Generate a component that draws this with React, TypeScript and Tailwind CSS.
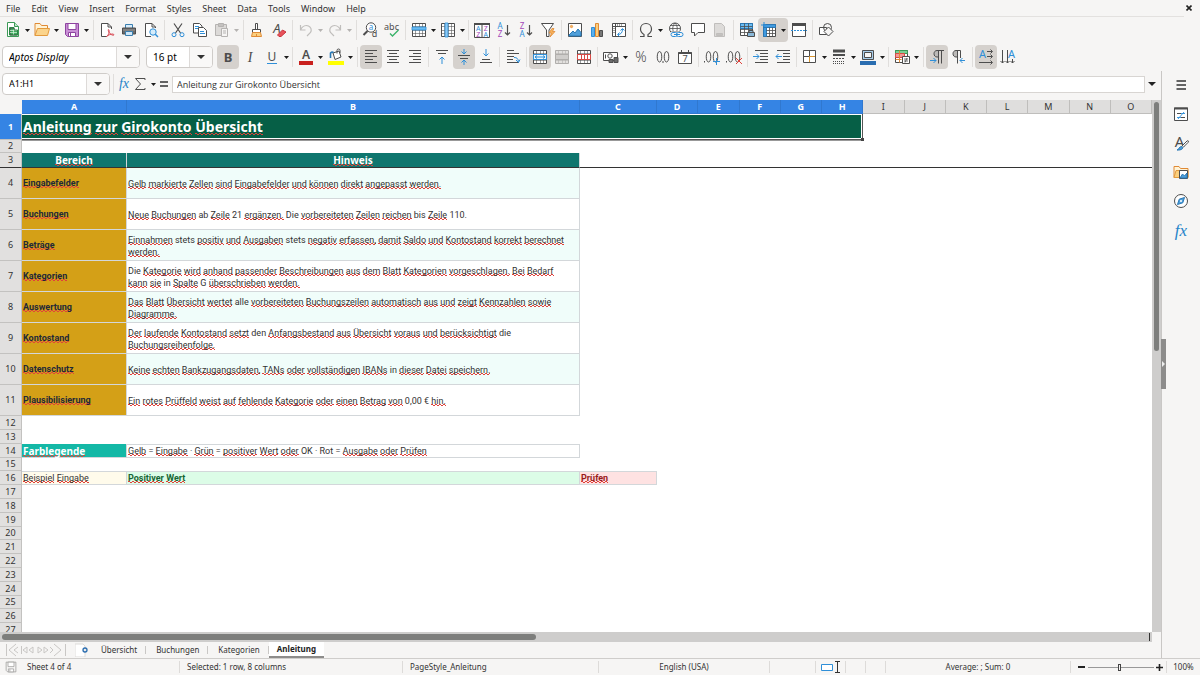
import React from 'react';
import clsx from 'clsx';

const MENUS = ['File', 'Edit', 'View', 'Insert', 'Format', 'Styles', 'Sheet', 'Data', 'Tools', 'Window', 'Help'];
const COLUMNS = ['A', 'B', 'C', 'D', 'E', 'F', 'G', 'H', 'I', 'J', 'K', 'L', 'M', 'N', 'O'];

const HINTS = [
  ['Eingabefelder', 'Gelb markierte Zellen sind Eingabefelder und können direkt angepasst werden.'],
  ['Buchungen', 'Neue Buchungen ab Zeile 21 ergänzen. Die vorbereiteten Zeilen reichen bis Zeile 110.'],
  ['Beträge', 'Einnahmen stets positiv und Ausgaben stets negativ erfassen, damit Saldo und Kontostand korrekt berechnet\nwerden.'],
  ['Kategorien', 'Die Kategorie wird anhand passender Beschreibungen aus dem Blatt Kategorien vorgeschlagen. Bei Bedarf\nkann sie in Spalte G überschrieben werden.'],
  ['Auswertung', 'Das Blatt Übersicht wertet alle vorbereiteten Buchungszeilen automatisch aus und zeigt Kennzahlen sowie\nDiagramme.'],
  ['Kontostand', 'Der laufende Kontostand setzt den Anfangsbestand aus Übersicht voraus und berücksichtigt die\nBuchungsreihenfolge.'],
  ['Datenschutz', 'Keine echten Bankzugangsdaten, TANs oder vollständigen IBANs in dieser Datei speichern.'],
  ['Plausibilisierung', 'Ein rotes Prüffeld weist auf fehlende Kategorie oder einen Betrag von 0,00 € hin.'],
];

// words the English dictionary accepts
const KNOWN = new Set(['stets', 'ab', 'Die', '21', 'bis', '110.', 'in', 'G', 'alle', 'den', 'die', '0,00', '€', '=', '·', 'OK', 'Rot']);

const Spell = ({ children }: { children: string }) => (
  <>
    {children.split(/(\s)/).map((word, i) =>
      KNOWN.has(word) || !word.trim() ? (
        word
      ) : (
        <span key={i} className="bg-[linear-gradient(90deg,#e0413a_50%,transparent_50%),linear-gradient(90deg,transparent_50%,#e0413a_50%)] bg-[length:4px_1px] bg-[position:0_calc(100%_-_2px),0_calc(100%_-_1px)] bg-repeat-x">
          {word}
        </span>
      ),
    )}
  </>
);

/* ---------- icons ---------- */

type IconProps = { children: React.ReactNode; size?: string };

const Icon = ({ children, size = 'size-4' }: IconProps) => (
  <svg viewBox="0 0 16 16" fill="none" stroke="#4d4d4d" className={clsx(size, 'shrink-0 overflow-visible')} aria-hidden="true">
    {children}
  </svg>
);

type GlyphProps = { x: number; y: number; s: number; fill?: string; weight?: number; italic?: boolean; serif?: boolean; children: string };

const Glyph = ({ x, y, s, fill = '#4d4d4d', weight = 400, italic, serif, children }: GlyphProps) => (
  <text x={x} y={y} fontSize={s} fill={fill} stroke="none" fontWeight={weight} fontStyle={italic ? 'italic' : 'normal'} fontFamily={serif ? '"Liberation Serif", serif' : '"Noto Sans", sans-serif'} textAnchor="middle">
    {children}
  </text>
);

const Caret = ({ dim }: { dim?: boolean }) => (
  <svg viewBox="0 0 5 3" className="w-[5px] h-[3px] shrink-0" aria-hidden="true">
    <path d="M0 0h5L2.5 3z" fill={dim ? '#b5b3b1' : '#1c1c1c'} />
  </svg>
);

const BLUE = '#2f8fd8';

const NewDoc = () => (
  <Icon>
    <path d="M2.500.5h7l4 4v10h-11z" fill="#fff" stroke="#3c9a57" />
    <path d="M9.500.5v4h4" fill="#bfe6c9" stroke="#3c9a57" />
    <path d="M5 6h4v2.500h3.500v4.500H5z" fill="#3fae5f" />
    <path d="M5 8.500h7M5 10.500h7M8.500 7v6" stroke="#d9f3df" strokeWidth=".7" />
    <path d="M4.500 5.500h4.500v2.500h3.500v5h-8z" stroke="#2c8546" />
  </Icon>
);
const Open = () => (
  <Icon>
    <path d="M1 13.500V1.500h5l1.500 2H13.500v3" fill="#fff3d6" stroke="#e08a35" />
    <path d="M3.500 6.500h12l-2 7H1z" fill="#fbd48c" stroke="#e39a3d" />
  </Icon>
);
const Save = ({ grey }: { grey?: boolean }) => (
  <Icon>
    <path d="M1.500 1.500h13v13h-11l-2-2z" fill={grey ? '#f6f5f4' : '#c98fd6'} stroke={grey ? '#9b9a98' : '#8e44a0'} />
    <path d="M4 1.500h8v6H4z" fill="#fff" stroke={grey ? '#9b9a98' : '#8e44a0'} />
    <path d="M4.500 10.500h7v4h-7z" fill="#fff" stroke={grey ? '#9b9a98' : '#8e44a0'} />
    <path d="M6.500 11v3" stroke={grey ? '#9b9a98' : '#8e44a0'} />
  </Icon>
);
const Pdf = () => (
  <Icon>
    <path d="M12.500 7V5L9 1.500H2.500v13H8" fill="#fff" />
    <path d="M9 1.500V5h3.500" />
    <path d="M7.500 14.500c2-1 3-4 2.500-6.500-.3-1-1-.5-.7.500.7 2.500 2.700 4.500 5 4.800 1 0 .8-1.200-.5-1.300-2 0-4.500 1-6.300 2.500z" stroke="#d94a55" />
  </Icon>
);
const Printer = () => (
  <Icon>
    <path d="M4.500 6V2.500h7V6" fill="#d7ecfb" stroke="#3a7fb0" />
    <path d="M1.500 6h13v6h-13z" fill="#6b6b6b" />
    <path d="M2 8h12" stroke="#9a9a9a" />
    <path d="M4.500 9.500h7v4h-7z" fill="#cfe6f6" stroke="#3a7fb0" />
  </Icon>
);
const Preview = () => (
  <Icon>
    <path d="M12.500 6V5L9 1.500H2.500v13H8" fill="#fff" />
    <path d="M9 1.500V5h3.500" />
    <circle cx="10" cy="10" r="3.200" fill="#d4ecfb" stroke={BLUE} />
    <path d="M12.300 12.300l2.700 2.700" stroke={BLUE} strokeWidth="1.500" />
  </Icon>
);
const Cut = () => (
  <Icon>
    <path d="M4 1.500l6.500 9.500M12 1.500L5.500 11" strokeWidth="1.200" />
    <circle cx="4" cy="12.700" r="2" stroke={BLUE} />
    <circle cx="12" cy="12.700" r="2" stroke={BLUE} />
  </Icon>
);
const Copy = () => (
  <Icon>
    <path d="M1.500 1.500h6l2.500 2.500v7H1.500z" fill="#fff" />
    <path d="M3 4.500h4M3 6.500h3" stroke={BLUE} />
    <path d="M6.500 5.500h5l3 3v6h-8z" fill="#fff" />
    <path d="M8 9.500h4M8 11.500h5" stroke={BLUE} />
  </Icon>
);
const Paste = () => (
  <Icon>
    <path d="M1.500 2.500h11v11h-11z" fill="#dcdad8" stroke="#b5b3b1" />
    <path d="M4.500 1.500h5v3h-5z" fill="#c4c2c0" stroke="#b5b3b1" />
    <path d="M7.500 6.500h6v8h-6z" fill="#f6f5f4" stroke="#b5b3b1" />
    <path d="M9 9h3M9 11h3" stroke="#b5b3b1" />
  </Icon>
);
const Brush = () => (
  <Icon>
    <path d="M6.500 1.500h2v6h-2zM3.500 7.500h8v3h-8z" fill="#fff" />
    <path d="M3.500 10.500h8l1 4h-10z" fill="#fbcf7e" stroke="#e08a35" />
    <path d="M7.500 12v2.500" stroke="#e08a35" />
  </Icon>
);
const ClearFormat = () => (
  <Icon>
    <Glyph x={6} y={11} s={13} italic>A</Glyph>
    <path d="M6.500 13l5-5 3.500 2-5 4.500H8z" fill="#e8525a" stroke="#c9353f" />
  </Icon>
);
const Undo = ({ redo }: { redo?: boolean }) => (
  <Icon>
    <g transform={redo ? 'matrix(-1 0 0 1 16 0)' : undefined}>
      <path d="M2.500 3v5h5M2.500 8C4.500 4 8 3 10.500 4s3.500 4 2 6.500L9 14" stroke="#c0bebc" strokeWidth="1.200" />
    </g>
  </Icon>
);
const Find = () => (
  <Icon>
    <circle cx="9" cy="5.500" r="4.700" fill="#fff" />
    <Glyph x={9} y={8} s={8} fill={BLUE}>a</Glyph>
    <path d="M5.500 9L1.500 13" strokeWidth="2" />
    <Glyph x={12.500} y={15} s={9}>d</Glyph>
  </Icon>
);
const SpellCheck = () => (
  <Icon>
    <Glyph x={7.500} y={8} s={9}>abc</Glyph>
    <path d="M6 11.500l2.500 2.500L14.500 8" stroke="#3cb36a" strokeWidth="1.400" />
  </Icon>
);
const Grid = ({ kind }: { kind: 'row' | 'col' | 'merge' | 'plain' | 'split' }) => {
  const line = kind === 'plain' ? '#b0aeac' : '#4d4d4d';
  return (
    <Icon>
      <path d="M1.500 1.500h13v13h-13z" fill={kind === 'plain' ? '#e2e0de' : '#fff'} stroke={line} />
      <path d="M2 4.500h12M2 8.500h12M2 11.500h12M4.500 2v12M8.500 2v12M11.500 2v12" stroke={line} strokeOpacity=".7" strokeWidth=".8" />
      {kind === 'row' && <path d="M1 5h14v3H1z" fill="#6bbcf2" stroke={BLUE} strokeWidth=".8" />}
      {kind === 'col' && <path d="M5 1h3v14H5z" fill="#8cc9f4" stroke={BLUE} strokeWidth=".8" />}
      {kind === 'merge' && (
        <>
          <path d="M1.500 5.500h13v5h-13z" fill="#eaf6fe" stroke={BLUE} />
          <path d="M3 8h10M5 6.500L3 8l2 1.500M11 6.500L13 8l-2 1.500" stroke={BLUE} />
        </>
      )}
      {kind === 'plain' && <path d="M1.500 5.500h13v5h-13z" fill="#cfcdcb" stroke={line} />}
      {kind === 'split' && <path d="M1.500 5.500h13v5h-13zM5.500 5.500v5M8.500 5.500v5M11.500 5.500v5" fill="#fff" stroke="#d94a45" />}
    </Icon>
  );
};
const Sort = () => (
  <Icon>
    <path d="M.5 1.500h15v14H.5zM8 3v12" fill="#fff" />
    <path d="M0 2h16" strokeWidth="2" />
    <Glyph x={4.200} y={8.500} s={7} fill={BLUE}>A</Glyph>
    <Glyph x={4.200} y={15} s={7} fill="#a347ba">Z</Glyph>
    <Glyph x={11.800} y={8.500} s={7} fill="#a347ba">Z</Glyph>
    <Glyph x={11.800} y={15} s={7} fill={BLUE}>A</Glyph>
  </Icon>
);
const SortDir = ({ desc }: { desc?: boolean }) => (
  <Icon>
    <Glyph x={4} y={7} s={8} fill={desc ? '#a347ba' : BLUE}>{desc ? 'Z' : 'A'}</Glyph>
    <Glyph x={4} y={15} s={8} fill={desc ? BLUE : '#a347ba'}>{desc ? 'A' : 'Z'}</Glyph>
    <path d="M11.500 3v10M9 10.500l2.500 2.500 2.500-2.500" strokeWidth="1.200" />
  </Icon>
);
const Filter = () => (
  <Icon>
    <path d="M1.500 1.500h12L9 8v6.500H6.500V8z" fill="#fff" />
    <path d="M12 6.500L9 11h2.500L10 15l5-5.500h-2.500l1.500-3z" fill="#f8b35c" stroke="#e08a35" strokeWidth=".8" />
  </Icon>
);
const Picture = () => (
  <Icon>
    <path d="M1.500 1.500h13v13h-13z" fill="#fff" />
    <path d="M2 13l4-4 2 2 3-4 3 3.500V14H2z" fill="#4f9fda" stroke="#2a78b5" />
    <circle cx="4.500" cy="4.500" r="1.200" fill="#f8b35c" stroke="#e08a35" strokeWidth=".6" />
  </Icon>
);
const Chart = () => (
  <Icon>
    <path d="M2.500 5.500h3v9h-3z" fill="#5bb0ee" stroke={BLUE} />
    <path d="M6.500 1.500h3v13h-3z" fill="#fbcf7e" stroke="#e08a35" />
    <path d="M10.500 8.500h3v6h-3z" fill="#777" />
  </Icon>
);
const Pivot = () => (
  <Icon>
    <path d="M1.500 1.500h13v13h-13zM1.500 4.500h13M4.500 1.500v13" fill="#fff" />
    <path d="M7 12.500c3 0 4.500-2 4.500-5.500M9.500 8.500l2-2 2 2M8.500 10.500l-2 2 2 2" stroke={BLUE} />
    <path d="M6 3h1m1 0h1m1 0h1M3 6v1m0 1v1m0 1v1" />
  </Icon>
);
const Omega = () => (
  <Icon>
    <path d="M2 14.500h4v-2C3.500 11 2.500 9 2.500 7c0-3.200 2.300-5.500 5.500-5.500s5.500 2.300 5.500 5.500c0 2-1 4-3.500 5.500v2h4" strokeWidth="1.200" />
  </Icon>
);
const Link = () => (
  <Icon>
    <circle cx="7" cy="6.500" r="5.500" fill="#fff" />
    <path d="M1.500 6.500h11M2.500 3.500h9M2.500 9.500h9M7 1C4 4 4 9 7 12M7 1c3 3 3 8 0 11" strokeWidth=".8" />
    <path d="M3 9.500h12v6H3z" fill="#f6f5f4" stroke="none" />
    <rect x="3" y="10.500" width="6.500" height="4" rx="2" fill="#f6f5f4" stroke={BLUE} />
    <rect x="8.500" y="10.500" width="6.500" height="4" rx="2" fill="#f6f5f4" stroke={BLUE} />
    <path d="M6 12.500h6" stroke={BLUE} />
  </Icon>
);
const Comment = () => (
  <Icon>
    <path d="M1.500 1.500h13v9H8L4.500 14v-3.500h-3z" fill="#fff" />
  </Icon>
);
const HeaderFooter = () => (
  <Icon>
    <path d="M2.500 1.500h7l3 3v10h-10z" fill="#dddbd9" stroke="#c0bebc" />
    <path d="M4.500 11.500h6v2h-6z" fill="#c4c2c0" stroke="#c0bebc" />
  </Icon>
);
const PrintArea = () => (
  <Icon>
    <path d="M1.500 1.500h12v12h-12z" fill="#fff" />
    <path d="M1.500 1.500h12v5h-12z" fill="#6bbcf2" stroke="#2a78b5" />
    <path d="M1.500 4.500h12M1.500 7.500h12M1.500 10.500h12M5.500 1.500v12M9.500 1.500v12" strokeWidth=".8" />
    <path d="M8.500 10.500h7v4h-7zM10 8.500h4v2h-4z" fill="#8ab8d8" />
  </Icon>
);
const Freeze = () => (
  <Icon>
    <path d="M2.500 2.500h12v12h-12z" fill="#fff" />
    <path d="M2.500 2.500h12v3h-12zM2.500 5.500h3v9h-3z" fill="#3f9ae0" stroke="#2a78b5" />
    <path d="M5.500 8.500h9M5.500 11.500h9M8.500 5.500v9M11.500 5.500v9" strokeWidth=".8" />
    <path d="M0 3h5M3 0v5" stroke={BLUE} />
  </Icon>
);
const SplitWindow = () => (
  <Icon>
    <path d="M1.500 1.500h13v13h-13z" fill="#fff" />
    <path d="M1 2.500h14" strokeWidth="3" />
    <path d="M0 8.500h16" stroke={BLUE} strokeDasharray="2 1" />
  </Icon>
);
const Shapes = () => (
  <Icon>
    <path d="M1.500 5.500h7v7h-7z" fill="#fff" />
    <circle cx="9.500" cy="5.500" r="4" />
    <path d="M10.500 5l4.500 4.500L10.500 14 6 9.500z" fill="#f6f5f4" />
  </Icon>
);

const Align = ({ kind }: { kind: 'left' | 'center' | 'right' }) => (
  <Icon>
    {kind === 'left' && <path d="M2 1.500h12M2 4.500h8M2 7.500h12M2 10.500h8M2 13.500h12" />}
    {kind === 'center' && <path d="M2 1.500h12M4 4.500h8M2 7.500h12M4 10.500h8M2 13.500h12" />}
    {kind === 'right' && <path d="M2 1.500h12M6 4.500h8M2 7.500h12M6 10.500h8M2 13.500h12" />}
  </Icon>
);
const VAlign = ({ kind }: { kind: 'top' | 'middle' | 'bottom' }) => (
  <Icon>
    {kind === 'top' && (
      <>
        <path d="M2 1.500h12M4 4.500h8" />
        <path d="M8 15V8M5.500 10.500L8 8l2.500 2.500" stroke={BLUE} />
      </>
    )}
    {kind === 'middle' && (
      <>
        <path d="M2 6.500h12M4 9.500h8" />
        <path d="M8 0v5M5.500 2.500L8 5l2.500-2.500M8 16v-5M5.500 13.500L8 11l2.500 2.500" stroke={BLUE} />
      </>
    )}
    {kind === 'bottom' && (
      <>
        <path d="M4 10.500h8M2 13.500h12" />
        <path d="M8 0v7M5.500 4.500L8 7l2.500-2.500" stroke={BLUE} />
      </>
    )}
  </Icon>
);
const Wrap = () => (
  <Icon>
    <path d="M2 1.500h7M2 4.500h12M2 7.500h7M2 10.500h6M2 13.500h12" />
    <path d="M9 8.500c3 0 4 1 4.500 4M11 11l2.500 2.500L15 10.500" stroke={BLUE} />
  </Icon>
);
const FontColor = () => (
  <Icon>
    <Glyph x={8} y={10} s={12} weight={600}>A</Glyph>
    <path d="M1 14h14" stroke="#c9211e" strokeWidth="4" />
  </Icon>
);
const FillColor = () => (
  <Icon>
    <path d="M5 4l6-2 2 6-6 2.500z" fill="#fff" />
    <path d="M9 4.500V1.500a1.500 1.500 0 0 1 3 0V4" />
    <path d="M2.500 9V4c1-1 2-1 3-.5" stroke="#2a78b5" strokeWidth="1.600" />
    <path d="M0 14h16" stroke="#ffff00" strokeWidth="4" />
  </Icon>
);
const Currency = () => (
  <Icon>
    <path d="M.5 3.500h14v8H.5z" fill="#fff" />
    <circle cx="7" cy="7" r="2.200" />
    <path d="M2.500 5.500v4" />
    <path d="M6 10.500h4v3H6zM11 8.500h4v5h-4z" fill="#6b6b6b" />
  </Icon>
);
const Calendar = () => (
  <Icon>
    <path d="M1.500 3.500h13v11h-13z" fill="#fff" />
    <path d="M1.500 4h13" strokeWidth="2" />
    <path d="M4.500 1v3M11.500 1v3" />
    <Glyph x={8} y={13} s={9}>7</Glyph>
  </Icon>
);
// two open zeros, shared by the number format icons
const ZEROS = 'M4.500 2.500c-3 0-3 10.500 0 10.500s3-10.500 0-10.500zM11.500 2.500c-3 0-3 10.500 0 10.500s3-10.500 0-10.500z';
const NumberFormat = () => (
  <Icon>
    <path d={ZEROS} />
    <path d="M8 12v2" />
  </Icon>
);
const Decimal = ({ remove }: { remove?: boolean }) => (
  <Icon>
    <path d={ZEROS} />
    <path d="M.5 12v1.500" />
    {remove ? <path d="M10 9l6 6M16 9l-6 6" stroke="#e0413a" /> : <path d="M12.500 9v7M9 12.500h7" stroke={BLUE} />}
  </Icon>
);
const Indent = ({ out }: { out?: boolean }) => (
  <Icon>
    <path d={out ? 'M2 1.500h13M8 4.500h7M8 7.500h7M8 10.500h7M2 13.500h13' : 'M2 1.500h13M7 4.500h8M7 7.500h8M7 10.500h8M2 13.500h13'} />
    <path d={out ? 'M7 7.500H1M3.500 5L1 7.500 3.500 10' : 'M0 7.500h6M3.500 5L6 7.500 3.500 10'} stroke={BLUE} />
  </Icon>
);
const Borders = () => (
  <Icon>
    <path d="M1.500 1.500h12v12h-12zM7.500 1.500v6M1.500 7.500h6" fill="#fff" />
    <path d="M7.500 7.500v5.500M7.500 7.500H13" stroke="#d9952f" />
  </Icon>
);
const BorderStyle = () => (
  <Icon>
    <path d="M2 2h12" strokeWidth="3" />
    <path d="M2 6h12" strokeWidth="2" />
    <path d="M2 9.500h12" strokeDasharray="2 1" />
    <path d="M2 12.500h12M2 14.500h12" strokeDasharray="1 1" />
  </Icon>
);
const BorderColor = () => (
  <Icon>
    <path d="M2.500 1.500h11v9h-11z" fill="#a8cdea" />
    <path d="M4.500 3.500h7v5h-7z" fill="#f6f5f4" />
    <path d="M0 14h16" stroke="#2a6db0" strokeWidth="4" />
  </Icon>
);
const Conditional = () => (
  <Icon>
    <path d="M1.500 1.500h12v12h-12z" fill="#fff" />
    <path d="M1.500 1.500h12v3h-12z" fill="#7ccf94" stroke="#3c9a57" />
    <path d="M1.500 4.500h9v4h-9z" fill="#f19a96" stroke="#d94a45" />
    <path d="M1.500 10.500h6M5.500 1.500v12" stroke="#e08a35" />
    <path d="M8.500 7.500h7v7h-7z" fill="#fff" />
    <path d="M10 10h4M10 12h4M13 9l-2 4.500" strokeWidth=".8" />
  </Icon>
);
const Pilcrow = ({ rtl }: { rtl?: boolean }) => (
  <Icon>
    <path d={rtl ? 'M6.500 8V1.500H5C1 1.500 1 8 5 8z' : 'M9.500 8V1.500H8C4 1.500 4 8 8 8z'} fill="#bcbab8" />
    <path d={rtl ? 'M6.500 8v6.500M9.500 9V1.500H6' : 'M9.500 8v6.500M12.500 14.500v-13M9 1.500h6'} />
    <path d={rtl ? 'M14 11.500H9M11.500 9L9 11.500l2.500 2.500' : 'M1 11.500h6M4.500 9L7 11.500 4.500 14'} stroke={BLUE} />
  </Icon>
);
const TextDir = ({ vertical }: { vertical?: boolean }) => (
  <Icon>
    {vertical ? (
      <>
        <Glyph x={11.500} y={9} s={11} fill={BLUE}>A</Glyph>
        <path d="M2.500 1v13M.5 12l2 2 2-2M7.500 1v13M5.500 12l2 2 2-2M12.500 10v4M10.500 12l2 2 2-2" />
      </>
    ) : (
      <>
        <Glyph x={4.500} y={9} s={11} fill={BLUE}>A</Glyph>
        <path d="M9 2.500h5M12.500.5l2 2-2 2M9 7.500h5M12.500 5.500l2 2-2 2M1 13.500h13M12.500 11.500l2 2-2 2" />
      </>
    )}
  </Icon>
);
const Fx = ({ s = 14 }: { s?: number }) => (
  <Icon>
    <Glyph x={8} y={12} s={s} fill="#2583c9" italic serif>fx</Glyph>
  </Icon>
);

/* ---------- toolbar parts ---------- */

type ToolProps = { label: string; active?: boolean; children: React.ReactNode };

const Tool = ({ label, active, children }: ToolProps) => (
  <button type="button" aria-label={label} className={clsx('w-[22px] h-6 shrink-0 rounded flex items-center justify-center', active && 'bg-[#d5d1cd]')}>
    {children}
  </button>
);

type DropToolProps = ToolProps & { tight?: boolean; dim?: boolean };

const DropTool = ({ label, active, tight, dim, children }: DropToolProps) => (
  <button type="button" aria-label={label} className={clsx('h-6 shrink-0 rounded flex items-center gap-1 pl-[3px]', tight ? 'w-[29px]' : 'w-[30px]', active && 'bg-[#d5d1cd]')}>
    {children}
    <Caret dim={dim} />
  </button>
);

const Sep = () => <span className="mx-[2px] w-px h-5 shrink-0 bg-[#e0dedc]" />;

type ComboProps = { label: string; value: string; className: string; italic?: boolean; wide?: boolean };

const Combo = ({ label, value, className, italic, wide }: ComboProps) => (
  <div className={clsx('flex h-[22px] shrink-0 rounded border border-[#cfccc9] bg-white overflow-hidden', className)}>
    <input aria-label={label} defaultValue={value} className={clsx('min-w-0 flex-1 pl-1.5 outline-none text-black', wide ? 'text-[10px]' : 'text-[9px]', italic && 'italic')} />
    <button type="button" aria-label={`${label} list`} className="w-[23px] border-l border-[#dddad8] bg-[#f9f8f7] flex items-center justify-center">
      <svg viewBox="0 0 8 4" className="w-2 h-1" aria-hidden="true"><path d="M0 0h8L4 4z" fill="#333" /></svg>
    </button>
  </div>
);

/* ---------- sheet ---------- */

const RowHead = ({ n, selected }: { n: number; selected?: boolean }) => (
  <th scope="row" className={clsx("border-r border-b border-[#c3c2c0] p-0 font-['Noto_Sans',sans-serif]", selected ? 'bg-[#3584e4] text-white font-bold' : 'bg-[#e1e0df] font-normal', n === 3 && 'border-b-[#333]')}>
    {n}
  </th>
);

const GRID = 'border-r border-b border-[#d3d7da] p-0 pl-px';
const NARROW = "font-['Roboto',sans-serif] [&_span]:pb-px";

const EmptyRow = ({ n }: { n: number }) => (
  <tr className={n % 5 === 0 ? 'h-[13px]' : 'h-[14px]'}>
    <RowHead n={n} />
    <td colSpan={15} className="p-0" />
  </tr>
);

const Sheet = () => (
  <table className="w-full table-fixed border-separate border-spacing-0 text-[9px] leading-3 text-[#333]">
    <colgroup>
      <col className="w-[22px]" />
      <col className="w-[105px]" />
      <col className="w-[453px]" />
      <col className="w-[77px]" />
      {COLUMNS.slice(3).map((c) => <col key={c} />)}
    </colgroup>
    <thead>
      <tr className="h-[14px]">
        <td className="bg-[#f6f5f4] p-0" />
        {COLUMNS.map((c, i) => (
          <th key={c} scope="col" className={clsx('p-0 border-r border-b', i < 8 ? 'bg-[#3584e4] border-[#3078cf] text-white font-bold' : 'bg-[#dfdedd] border-[#bfbebc] font-normal')}>
            {c}
          </th>
        ))}
      </tr>
    </thead>
    <tbody>
      <tr className="h-[26px]">
        <RowHead n={1} selected />
        <td colSpan={8} className="relative h-[26px] p-0 border-r border-b border-[#555]">
          <div className="h-[25px] border border-l-0 border-white bg-[#065f46] flex items-center pl-px text-[14px] font-bold text-white">
            <div><Spell>Anleitung zur Girokonto Übersicht</Spell></div>
          </div>
          <span className="absolute -right-[2px] -bottom-[2px] size-[3px] bg-[#444]" />
        </td>
        <td colSpan={7} className="p-0" />
      </tr>
      <tr className="h-[13px]">
        <RowHead n={2} />
        <td colSpan={8} className="border-t border-[#999] p-0" />
        <td colSpan={7} className="p-0" />
      </tr>
      <tr className="h-[15px]">
        <RowHead n={3} />
        <td className="p-0 border-r border-b border-r-[#d3d7da] border-b-[#333] bg-[#0f766e] text-[10px] font-bold text-white text-center"><Spell>Bereich</Spell></td>
        <td className="p-0 border-r border-b border-r-[#d3d7da] border-b-[#333] bg-[#0f766e] text-[10px] font-bold text-white text-center"><Spell>Hinweis</Spell></td>
        <td colSpan={13} className="p-0 border-b border-[#333]" />
      </tr>
      {HINTS.map(([area, hint], i) => (
        <tr key={area} className="h-[31px]">
          <RowHead n={i + 4} />
          <td className={clsx(GRID, NARROW, 'bg-[#d4a017] font-bold text-[#1f2937]')}><Spell>{area}</Spell></td>
          <td className={clsx(GRID, NARROW, 'pt-px whitespace-pre', i % 2 === 0 && 'bg-[#f0fdfa]')}><Spell>{hint}</Spell></td>
          <td colSpan={13} className="p-0" />
        </tr>
      ))}
      <EmptyRow n={12} />
      <EmptyRow n={13} />
      <tr className="h-[14px]">
        <RowHead n={14} />
        <td className={clsx(GRID, 'bg-[#14b8a6] text-[10px] font-bold text-white')}><Spell>Farblegende</Spell></td>
        <td className={clsx(GRID, NARROW, 'border-t')}><Spell>Gelb = Eingabe · Grün = positiver Wert oder OK · Rot = Ausgabe oder Prüfen</Spell></td>
        <td colSpan={13} className="p-0" />
      </tr>
      <EmptyRow n={15} />
      <tr className="h-[14px]">
        <RowHead n={16} />
        <td className={clsx(GRID, NARROW, 'border-t bg-[#fffbeb]')}><Spell>Beispiel Eingabe</Spell></td>
        <td className={clsx(GRID, NARROW, 'border-t bg-[#dcfce7] font-bold text-[#166534]')}><Spell>Positiver Wert</Spell></td>
        <td className={clsx(GRID, NARROW, 'border-t bg-[#fee2e2] font-bold text-[#991b1b]')}><Spell>Prüfen</Spell></td>
        <td colSpan={12} className="p-0" />
      </tr>
      {Array.from({ length: 11 }, (_, i) => <EmptyRow key={i} n={17 + i} />)}
    </tbody>
  </table>
);

/* ---------- side bar ---------- */

const SideBar = () => (
  <aside className="relative w-[39px] shrink-0 border-l border-[#c9c7c5] flex flex-col items-center gap-[13px] pt-[6px]">
    <button type="button" aria-label="Sidebar settings">
      <Icon><path d="M3.500 4h9.500M3.500 8h9.500M3.500 12h9.500" stroke="#333" strokeWidth="1.500" /></Icon>
    </button>
    <button type="button" aria-label="Properties">
      <Icon>
        <path d="M1.500 2h13v12.500h-13z" fill="#fff" />
        <path d="M1 2.500h14" strokeWidth="2" />
        <path d="M4 7.500h8M4 11.500h8M11 6L5 13" stroke={BLUE} strokeWidth=".9" />
        <path d="M4 7.500h4M8 11.500h4" />
      </Icon>
    </button>
    <button type="button" aria-label="Styles">
      <Icon>
        <Glyph x={6.500} y={12} s={15}>A</Glyph>
        <path d="M9 11l5-5c1.500-1 2 .5 1 1.500l-5 5" fill="#fff" />
        <path d="M4 15c2 0 2-4 5-3.500 2 1.500 0 4-5 3.500z" fill="#4f9fda" stroke="#2a78b5" />
      </Icon>
    </button>
    <button type="button" aria-label="Gallery">
      <Icon>
        <path d="M1 13.500v-11h5l1.500 2H15v9z" fill="#fff3d6" stroke="#e08a35" />
        <path d="M1 13.500l2-7h12v7z" fill="#fbcf7e" stroke="#e39a3d" />
        <path d="M6.500 6.500h8v8h-8z" fill="#fff" />
        <path d="M7 14l2.500-4 2 2 2.500-3v5z" fill="#4f9fda" stroke="#2a78b5" />
      </Icon>
    </button>
    <button type="button" aria-label="Navigator">
      <Icon>
        <circle cx="8" cy="8" r="6.500" fill="#fff" />
        <path d="M11.500 4.500L9.800 9.800 4.500 11.500 6.200 6.200z" fill="#4f9fda" stroke="#2a78b5" />
        <circle cx="8" cy="8" r="1" fill="#fff" stroke="none" />
      </Icon>
    </button>
    <button type="button" aria-label="Functions">
      <Icon><Glyph x={8} y={14} s={17} fill="#2583c9" italic serif>fx</Glyph></Icon>
    </button>
    <button type="button" aria-label="Hide sidebar" className="absolute -left-[1px] top-[268px] w-[5px] h-[50px] bg-[#8d8c8b] flex items-center justify-center">
      <svg viewBox="0 0 3 6" className="w-[3px] h-1.5" aria-hidden="true"><path d="M0 0l3 3-3 3z" fill="#eee" /></svg>
    </button>
  </aside>
);

const TabBar = () => (
  <div className="flex h-4 shrink-0 items-stretch text-[8px] text-[#333]">
    <div className="flex w-[75px] items-center pl-[5px]">
      <svg viewBox="0 0 62 14" className="w-[62px] h-3.5" fill="none" stroke="#c9c7c5" role="img" aria-label="Sheet navigation">
        <path d="M1.500 1v12M11 1L4 7l7 6M13 4L9 7l4 3M16.500 3v8M22 4l-4 3 4 3zM28 4l-4 3 4 3zM33 4l4 3-4 3zM39 4l4 3-4 3zM45 4l3 3-3 3M49 1l7 6-7 6M60.500 1v12" />
      </svg>
    </div>
    <button type="button" aria-label="Add sheet" className="flex w-[16px] items-center">
      <svg viewBox="0 0 14 14" className="size-3.5" fill="none" aria-hidden="true">
        <path d="M0 1h8l2 2v11H0z" fill="#fff" stroke="#dddbd9" />
        <circle cx="10" cy="7" r="2" stroke="#2a6db0" strokeWidth="1.300" />
      </svg>
    </button>
    {['Übersicht', 'Buchungen', 'Kategorien'].map((tab) => (
      <button type="button" key={tab} className="flex items-center pl-2.5 after:ml-2 after:h-2 after:w-px after:bg-[#c9c7c5]">
        {tab}
      </button>
    ))}
    <button type="button" className="border-b-2 border-[#8d8c8b] bg-white px-2 font-bold leading-3 text-[#222]">Anleitung</button>
  </div>
);

const STATUS_CELL = 'flex h-3 items-center border-r border-[#dddbd9] whitespace-nowrap';

const StatusBar = () => (
  <footer className="grid h-[17px] shrink-0 grid-cols-[22px_158fr_223fr_196fr_171fr_46px_30px_20px_20px_185fr_96px_33px] items-center border-t border-[#cfcdcb] text-[8px] text-[#333]">
    <div className="flex h-3 items-center justify-center">
      <span className="scale-75"><Save grey /></span>
    </div>
    <div className={clsx(STATUS_CELL, 'pl-[5px]')}>Sheet 4 of 4</div>
    <div className={clsx(STATUS_CELL, 'pl-[7px]')}>Selected: 1 row, 8 columns</div>
    <div className={clsx(STATUS_CELL, 'pl-[7px]')}>PageStyle_Anleitung</div>
    <div className={clsx(STATUS_CELL, 'justify-center')}>English (USA)</div>
    <div className={STATUS_CELL} />
    <div className={clsx(STATUS_CELL, 'justify-center')}>
      <svg viewBox="0 0 20 12" className="w-5 h-3" fill="none" aria-hidden="true">
        <path d="M.5 3.500h11v6H.5z" fill="#fff" stroke={BLUE} />
        <path d="M14 .5h5M14 11.500h5M16.500 1v10" stroke="#333" />
      </svg>
    </div>
    <div className={STATUS_CELL} />
    <div className={STATUS_CELL} />
    <div className={clsx(STATUS_CELL, 'justify-center')}>Average: ; Sum: 0</div>
    <div className={clsx(STATUS_CELL, 'justify-between pl-[7px] pr-[3px]')}>
      <button type="button" aria-label="Zoom out" className="h-[2px] w-[7px] bg-[#222]" />
      <input
        type="range"
        aria-label="Zoom"
        defaultValue={49}
        className="h-2 w-[66px] appearance-none bg-[linear-gradient(#999,#999)] bg-[length:100%_1px] bg-center bg-no-repeat [&::-webkit-slider-thumb]:appearance-none [&::-webkit-slider-thumb]:h-[7px] [&::-webkit-slider-thumb]:w-[3px] [&::-webkit-slider-thumb]:border [&::-webkit-slider-thumb]:border-[#444] [&::-webkit-slider-thumb]:bg-[#f6f5f4]"
      />
      <button type="button" aria-label="Zoom in" className="flex">
        <svg viewBox="0 0 7 7" className="size-[7px]" aria-hidden="true"><path d="M0 3.500h7M3.500 0v7" stroke="#222" strokeWidth="1.600" /></svg>
      </button>
    </div>
    <div className="flex items-center justify-center">100%</div>
  </footer>
);

export default function App() {
  return (
    <div className="flex h-screen w-full flex-col overflow-hidden bg-[#f6f5f4] font-['Noto_Sans',sans-serif]">
      <header className="shrink-0">
        <nav className="relative mr-4 flex h-[17px] items-center gap-[11px] border-b border-[#e3e1df] pl-[6px] pt-px text-[9px] text-[#333]">
          {MENUS.map((m) => <button type="button" key={m}>{m}</button>)}
          <button type="button" aria-label="Close document" className="absolute -right-[8px] top-[5px]">
            <svg viewBox="0 0 6 6" className="size-1.5" aria-hidden="true"><path d="M.5.5l5 5M5.500.5l-5 5" stroke="#222" strokeWidth="1.600" /></svg>
          </button>
        </nav>

        <div className="flex h-[26px] items-center pl-[2px]">
          <DropTool label="New" tight><NewDoc /></DropTool>
          <DropTool label="Open"><Open /></DropTool>
          <DropTool label="Save"><Save /></DropTool>
          <Sep />
          <Tool label="Export as PDF"><Pdf /></Tool>
          <Tool label="Print"><Printer /></Tool>
          <Tool label="Print preview"><Preview /></Tool>
          <Sep />
          <Tool label="Cut"><Cut /></Tool>
          <Tool label="Copy"><Copy /></Tool>
          <DropTool label="Paste" dim><Paste /></DropTool>
          <Sep />
          <Tool label="Clone formatting"><Brush /></Tool>
          <Tool label="Clear formatting"><ClearFormat /></Tool>
          <Sep />
          <DropTool label="Undo" tight dim><Undo /></DropTool>
          <DropTool label="Redo" dim><Undo redo /></DropTool>
          <Sep />
          <Tool label="Find and replace"><Find /></Tool>
          <Tool label="Spelling"><SpellCheck /></Tool>
          <Sep />
          <DropTool label="Row" tight><Grid kind="row" /></DropTool>
          <DropTool label="Column" tight><Grid kind="col" /></DropTool>
          <Sep />
          <Tool label="Sort"><Sort /></Tool>
          <Tool label="Sort ascending"><SortDir /></Tool>
          <Tool label="Sort descending"><SortDir desc /></Tool>
          <Tool label="AutoFilter"><Filter /></Tool>
          <Sep />
          <Tool label="Insert image"><Picture /></Tool>
          <Tool label="Insert chart"><Chart /></Tool>
          <Tool label="Insert pivot table"><Pivot /></Tool>
          <Sep />
          <DropTool label="Special character"><Omega /></DropTool>
          <Tool label="Insert hyperlink"><Link /></Tool>
          <Tool label="Insert comment"><Comment /></Tool>
          <Tool label="Headers and footers"><HeaderFooter /></Tool>
          <Sep />
          <Tool label="Print area"><PrintArea /></Tool>
          <DropTool label="Freeze rows and columns" active><Freeze /></DropTool>
          <Tool label="Split window"><SplitWindow /></Tool>
          <Sep />
          <Tool label="Draw functions"><Shapes /></Tool>
        </div>

        <div className="flex h-7 items-center pl-[2px]">
          <Combo label="Font name" value="Aptos Display" italic wide className="mr-1.5 w-[138px]" />
          <Combo label="Font size" value="16 pt" wide className="mr-1 w-[67px]" />
          <Tool label="Bold" active><Icon><Glyph x={8} y={12.500} s={13} weight={700}>B</Glyph></Icon></Tool>
          <Tool label="Italic"><Icon><Glyph x={8} y={12.500} s={14} italic serif>I</Glyph></Icon></Tool>
          <DropTool label="Underline" tight>
            <Icon>
              <Glyph x={8} y={12} s={12}>U</Glyph>
              <path d="M3 14.500h10" stroke={BLUE} />
            </Icon>
          </DropTool>
          <Sep />
          <DropTool label="Font color"><FontColor /></DropTool>
          <DropTool label="Background color"><FillColor /></DropTool>
          <Sep />
          <Tool label="Align left" active><Align kind="left" /></Tool>
          <Tool label="Align center"><Align kind="center" /></Tool>
          <Tool label="Align right"><Align kind="right" /></Tool>
          <Sep />
          <Tool label="Align top"><VAlign kind="top" /></Tool>
          <Tool label="Center vertically" active><VAlign kind="middle" /></Tool>
          <Tool label="Align bottom"><VAlign kind="bottom" /></Tool>
          <Sep />
          <Tool label="Wrap text"><Wrap /></Tool>
          <Sep />
          <Tool label="Merge and center" active><Grid kind="merge" /></Tool>
          <Tool label="Merge cells"><Grid kind="plain" /></Tool>
          <Tool label="Split cells"><Grid kind="split" /></Tool>
          <Sep />
          <DropTool label="Currency"><Currency /></DropTool>
          <Tool label="Percent"><Icon><Glyph x={8} y={13} s={14} weight={300}>%</Glyph></Icon></Tool>
          <Tool label="Number"><NumberFormat /></Tool>
          <Tool label="Date"><Calendar /></Tool>
          <Sep />
          <Tool label="Add decimal place"><Decimal /></Tool>
          <Tool label="Delete decimal place"><Decimal remove /></Tool>
          <Sep />
          <Tool label="Increase indent"><Indent /></Tool>
          <Tool label="Decrease indent"><Indent out /></Tool>
          <Sep />
          <DropTool label="Borders" tight><Borders /></DropTool>
          <DropTool label="Border style" tight><BorderStyle /></DropTool>
          <DropTool label="Border color" tight><BorderColor /></DropTool>
          <Sep />
          <DropTool label="Conditional formatting"><Conditional /></DropTool>
          <Sep />
          <Tool label="Left to right" active><Pilcrow /></Tool>
          <Tool label="Right to left"><Pilcrow rtl /></Tool>
          <Sep />
          <Tool label="Horizontal text" active><TextDir /></Tool>
          <Tool label="Vertical text"><TextDir vertical /></Tool>
        </div>
      </header>

      <div className="flex min-h-0 flex-1">
        <main className="flex min-w-0 flex-1 flex-col">
          <div className="flex h-[29px] shrink-0 items-center pb-[3px] pl-[2px] pr-[5px]">
            <Combo label="Name box" value="A1:H1" className="mr-px w-[108px]" />
            <Sep />
            <button type="button" aria-label="Function wizard" className="w-4"><Fx /></button>
            <button type="button" aria-label="Select function" className="flex h-5 w-6 items-center gap-[3px]">
              <Icon><path d="M13 4V2.500H3.500L8.500 8l-5 5.500H13V12" /></Icon>
              <Caret />
            </button>
            <button type="button" aria-label="Formula" className="mx-[2px] flex w-3 justify-center">
              <svg viewBox="0 0 8 6" className="w-2 h-1.5" aria-hidden="true"><path d="M0 1h8M0 5h8" stroke="#333" strokeWidth="1.400" /></svg>
            </button>
            <input aria-label="Input line" defaultValue="Anleitung zur Girokonto Übersicht" className="h-[17px] min-w-0 flex-1 border border-[#d8d5d2] bg-white pl-1 font-['Open_Sans',sans-serif] text-[9px] text-[#333] outline-none" />
            <button type="button" aria-label="Expand formula bar" className="ml-[3px]">
              <svg viewBox="0 0 8 4" className="w-2 h-1" aria-hidden="true"><path d="M0 0h8L4 4z" fill="#222" /></svg>
            </button>
          </div>

          <div className="flex min-h-0 flex-1">
            <div className="min-w-0 flex-1 overflow-hidden bg-white">
              <Sheet />
            </div>
            <div className="w-[9px] shrink-0 bg-[#cecdcc] px-[2px] pt-[2px]">
              <div className="h-[47%] rounded-full bg-[#7d7e7c]" />
            </div>
          </div>
          <div className="mr-[9px] flex h-[10px] shrink-0 items-center justify-between bg-[#cecdcc] pl-[2px] pr-[2px]">
            <div className="h-1.5 w-[534px] rounded-full bg-[#7d7e7c]" />
            <div className="h-2 w-px bg-[#333]" />
          </div>
          <TabBar />
        </main>
        <SideBar />
      </div>

      <StatusBar />
    </div>
  );
}
